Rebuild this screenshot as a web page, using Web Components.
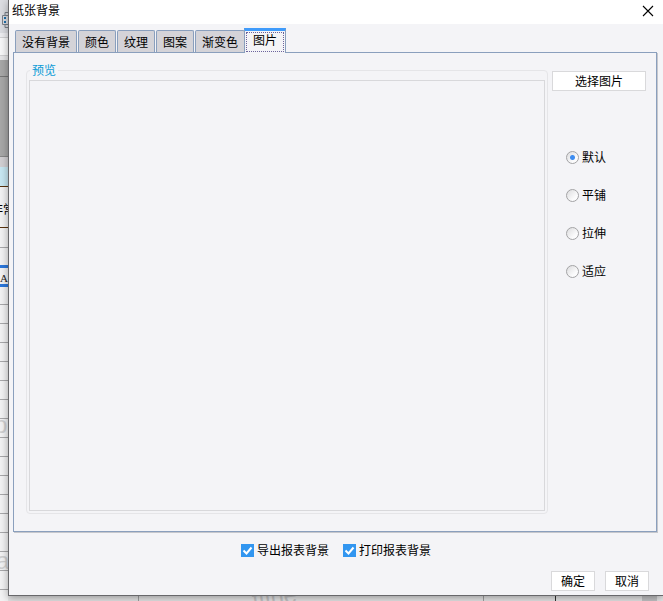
<!DOCTYPE html>
<html lang="zh-CN">
<head>
<meta charset="utf-8">
<title>纸张背景</title>
<style>
    body {
        margin: 0;
        height: 100vh;
        overflow: hidden;
        font: 12px/16px "Noto Sans CJK SC", "Liberation Sans", sans-serif;
        color: #000;
        background-color: #f3f3f4;
    }
</style>
</head>
<body>
<report-sheet></report-sheet>
<app-dialog heading="纸张背景">
    <tab-pane tabs="没有背景,颜色,纹理,图案,渐变色,图片" selected="5">
        <image-settings></image-settings>
    </tab-pane>
    <check-option slot="options" checked>导出报表背景</check-option>
    <check-option slot="options" checked>打印报表背景</check-option>
    <push-button slot="actions">确定</push-button>
    <push-button slot="actions">取消</push-button>
</app-dialog>

<script>
function attach (element, html) {
    const template = document.createElement ("template");
    template.innerHTML = html;
    const root = element.attachShadow ({mode: "open"});
    root.appendChild (template.content.cloneNode (true));
    return root;
}

// the report editor that stays visible behind the dialog
class ReportSheet extends HTMLElement {
    constructor () {
        super ();
        attach (this, `
<style>
    :host {
        position: absolute;
        inset: 0;
        z-index: -1;
        overflow: hidden;
        display: flex;
        flex-direction: column;
    }
    .toolbar { height: 33px; background-color: #dcdde2; border-bottom: 4px solid #ededf0; }
    .toolbar svg { display: block; padding-top: 12px; }
    .formula { height: 17px; background-color: #f8f8f9; border: solid #d0d0d2; border-width: 1px 0; }
    .ruler { height: 4px; background-color: #e6e6e8; }
    .canvas { height: 96px; background: linear-gradient(#777, #777) 0 16px / 8px 1px no-repeat #a8a8a8; }
    .head { height: 11px; background-color: #d2d0d3; border-top: 1px solid #888; box-sizing: border-box; }
    .column { height: 19px; background-color: #c8e8f3; }
    .title {
        height: 40px;
        line-height: 44px;
        border: solid #59330e;
        border-width: 1px 0;
        text-indent: -9px;
        white-space: nowrap;
    }
    .row { height: 19px; border-bottom: 1px solid #a8a8aa; }
    .gap { height: 17px; }
    .current {
        height: 16px;
        border: solid #2c78dc;
        border-width: 3px 0;
        font: 11px/20px "Liberation Serif", serif;
        color: #222;
    }
    .grid {
        flex: 1;
        margin-top: -1px;
        background: repeating-linear-gradient(transparent 0 18px, #a8a8aa 18px 19px);
    }
    .mark {
        position: absolute;
        color: #d0d0d1;
        font: 24px/24px "Liberation Sans", sans-serif;
    }
    .p { left: -6px; top: 413px; }
    .a { left: -4px; top: 549px; }
    .fine { left: 252px; top: 585px; rotate: -8deg; color: #c4c4c5; }
    .lower {
        position: absolute;
        left: 8px;
        right: 0;
        bottom: 0;
        height: 5px;
        background-color: #e6e6e7;
        display: grid;
        grid-template-columns: 131px 345px 72px 86px 15px 1fr;
    }
    .lower i { border-right: 1px solid #a0a0a2; }
    .lower i:nth-child(3) { border-right: 1px dashed #333; }
    .lower i:nth-child(4) { border: 0; }
    .lower i:nth-child(5) { background-color: #c4c4c6; border: 0; }
</style>
<div class="toolbar">
    <svg width="9" height="16" viewBox="0 0 9 16" fill="none" stroke="#7b8189" aria-hidden="true">
        <path d="M9 3.5H2.5v9H9M5 3V.5h4M5 13v2.5h4"/>
        <path d="M4 5h2v2H4zM4 9h2v2H4z" fill="#1e70ad" stroke="none"/>
    </svg>
</div>
<div class="formula"></div>
<div class="ruler"></div>
<div class="canvas"></div>
<div class="head"></div>
<div class="column"></div>
<div class="title">非常</div>
<div class="row"></div>
<div class="gap"></div>
<div class="current">AB</div>
<div class="grid"></div>
<div class="lower"><i></i><i></i><i></i><i></i><i></i></div>
<span class="mark p">pl</span>
<span class="mark a">a</span>
<span class="mark fine">ffine</span>
`);
    }
}
customElements.define ("report-sheet", ReportSheet);

class AppDialog extends HTMLElement {
    constructor () {
        super ();
        const root = attach (this, `
<style>
    :host {
        display: flex;
        flex-direction: column;
        box-sizing: border-box;
        height: calc(100vh - 5px);
        margin-left: 8px;
        border: solid #68686b;
        border-width: 0 0 1px 1px;
        background-color: #f4f4f7;
        box-shadow: 0 2px 8px rgba(0, 0, 0, .35);
    }
    header {
        display: flex;
        justify-content: space-between;
        align-items: center;
        height: 24px;
        padding: 0 9px 0 3px;
        background-color: #fff;
    }
    h1 { margin: 0; font: inherit; padding-bottom: 4px; }
    header button {
        display: flex;
        padding: 0 0 2px;
        border: 0;
        background: none;
    }
    main {
        flex: 1;
        display: flex;
        padding: 4px 6px 0 4px;
    }
    .options {
        display: flex;
        justify-content: center;
        gap: 14px;
        padding-top: 10px;
    }
    .actions {
        display: flex;
        justify-content: flex-end;
        gap: 10px;
        padding: 13px 14px 4px;
    }
</style>
<header>
    <h1></h1>
    <button type="button" aria-label="关闭">
        <svg width="12" height="12" viewBox="0 0 12 12" stroke="#000" stroke-width="1.1"><path d="M1 1l10 10M11 1L1 11"/></svg>
    </button>
</header>
<main><slot></slot></main>
<div class="options"><slot name="options"></slot></div>
<div class="actions"><slot name="actions"></slot></div>
`);
        root.querySelector ("h1").textContent = this.getAttribute ("heading");
    }
}
customElements.define ("app-dialog", AppDialog);

class TabPane extends HTMLElement {
    constructor () {
        super ();
        const root = attach (this, `
<style>
    :host {
        flex: 1;
        display: flex;
        flex-direction: column;
    }
    nav {
        display: flex;
        align-items: flex-end;
        gap: 1px;
        height: 24px;
        padding-left: 2px;
    }
    button {
        height: 22px;
        padding: 0 6px;
        border: 1px solid #8a9fbd;
        border-bottom: 0;
        border-radius: 2px 2px 0 0;
        background-color: #d4d3d8;
        font: inherit;
        line-height: 22px;
        color: inherit;
    }
    button[aria-selected="true"] {
        z-index: 1;
        height: 25px;
        margin: 0 0 -1px -2px;
        padding: 0 1px 1px;
        border-top: 3px solid #3f9bfb;
        border-radius: 0;
        background-color: #f4f4f7;
    }
    button span { display: block; }
    [aria-selected="true"] span {
        height: 18px;
        padding: 0 6px;
        border: 1px dotted #6c639c;
        line-height: 14px;
    }
    section {
        flex: 1;
        display: flex;
        border: 1px solid #8a9fbd;
        box-shadow: 1px 1px 0 #c6c7cc;
    }
</style>
<nav role="tablist"></nav>
<section role="tabpanel"><slot></slot></section>
`);
        const nav = root.querySelector ("nav");
        const selected = Number (this.getAttribute ("selected"));
        this.getAttribute ("tabs").split (",").forEach ((name, i) => {
            const button = document.createElement ("button");
            const span = document.createElement ("span");
            button.type = "button";
            button.setAttribute ("role", "tab");
            button.setAttribute ("aria-selected", i === selected);
            span.textContent = name;
            button.appendChild (span);
            button.addEventListener ("click", () => {
                nav.querySelectorAll ("button").forEach (b => b.setAttribute ("aria-selected", b === button));
            });
            nav.appendChild (button);
        });
    }
}
customElements.define ("tab-pane", TabPane);

class PushButton extends HTMLElement {
    constructor () {
        super ();
        attach (this, `
<style>
    :host { display: flex; }
    button {
        flex: 1;
        height: 20px;
        padding: 0 9px;
        border: 1px solid #d9d9db;
        background-color: #fff;
        font: inherit;
        line-height: 18px;
        color: inherit;
    }
</style>
<button type="button"><slot></slot></button>
`);
    }
}
customElements.define ("push-button", PushButton);

class CheckOption extends HTMLElement {
    constructor () {
        super ();
        const root = attach (this, `
<style>
    :host { display: block; }
    label { display: flex; align-items: center; gap: 3px; }
    input {
        appearance: none;
        width: 13px;
        height: 13px;
        margin: 0;
        box-sizing: border-box;
        border: 1px solid #b0b0b3;
        background-color: #fff;
    }
    input:checked { border: 0; background-color: #3296f0; }
    .box { display: grid; }
    .box > * { grid-area: 1 / 1; }
    svg { pointer-events: none; }
    input:not(:checked) + svg { visibility: hidden; }
</style>
<label>
    <span class="box">
        <input type="checkbox">
        <svg width="13" height="13" viewBox="0 0 13 13" fill="none" stroke="#fff" stroke-width="2"><path d="M2.5 6.5l3 3 5-6"/></svg>
    </span>
    <slot></slot>
</label>
`);
        root.querySelector ("input").checked = this.hasAttribute ("checked");
    }
}
customElements.define ("check-option", CheckOption);

// all the radios share one root, otherwise they would not form a group
class RadioList extends HTMLElement {
    constructor () {
        super ();
        const root = attach (this, `
<style>
    :host {
        display: flex;
        flex-direction: column;
        align-items: flex-start;
        gap: 22px;
    }
    label { display: flex; align-items: center; gap: 3px; }
    input {
        appearance: none;
        box-sizing: border-box;
        width: 13px;
        height: 13px;
        margin: 0;
        border: 1px solid #a3a3a5;
        border-radius: 50%;
        background: linear-gradient(135deg, #dcdcde, #fbfbfc 70%);
    }
    input:checked {
        background: radial-gradient(circle, #3d8cf0 2px, transparent 3px), linear-gradient(135deg, #dcdcde, #fbfbfc 70%);
    }
</style>
`);
        this.getAttribute ("options").split (",").forEach ((name, i) => {
            const label = document.createElement ("label");
            const input = document.createElement ("input");
            input.type = "radio";
            input.name = "layout";
            input.checked = i === 0;
            label.append (input, name);
            root.appendChild (label);
        });
    }
}
customElements.define ("radio-list", RadioList);

class ImageSettings extends HTMLElement {
    constructor () {
        super ();
        attach (this, `
<style>
    :host {
        flex: 1;
        display: flex;
        gap: 4px;
        padding: 9px 10px 17px 12px;
    }
    fieldset {
        flex: 1;
        display: flex;
        min-width: 0;
        margin: 0;
        padding: 2px;
        border: 1px solid #e5e5e8;
        border-radius: 4px;
    }
    legend {
        margin-left: 1px;
        padding: 0 2px;
        color: #0a9bd6;
    }
    .preview { flex: 1; border: 1px solid #d8d8db; }
    aside {
        width: 94px;
        padding-top: 9px;
    }
    radio-list { padding: 58px 0 0 14px; }
</style>
<fieldset>
    <legend>预览</legend>
    <div class="preview"></div>
</fieldset>
<aside>
    <push-button>选择图片</push-button>
    <radio-list options="默认,平铺,拉伸,适应"></radio-list>
</aside>
`);
    }
}
customElements.define ("image-settings", ImageSettings);
</script>
</body>
</html>
